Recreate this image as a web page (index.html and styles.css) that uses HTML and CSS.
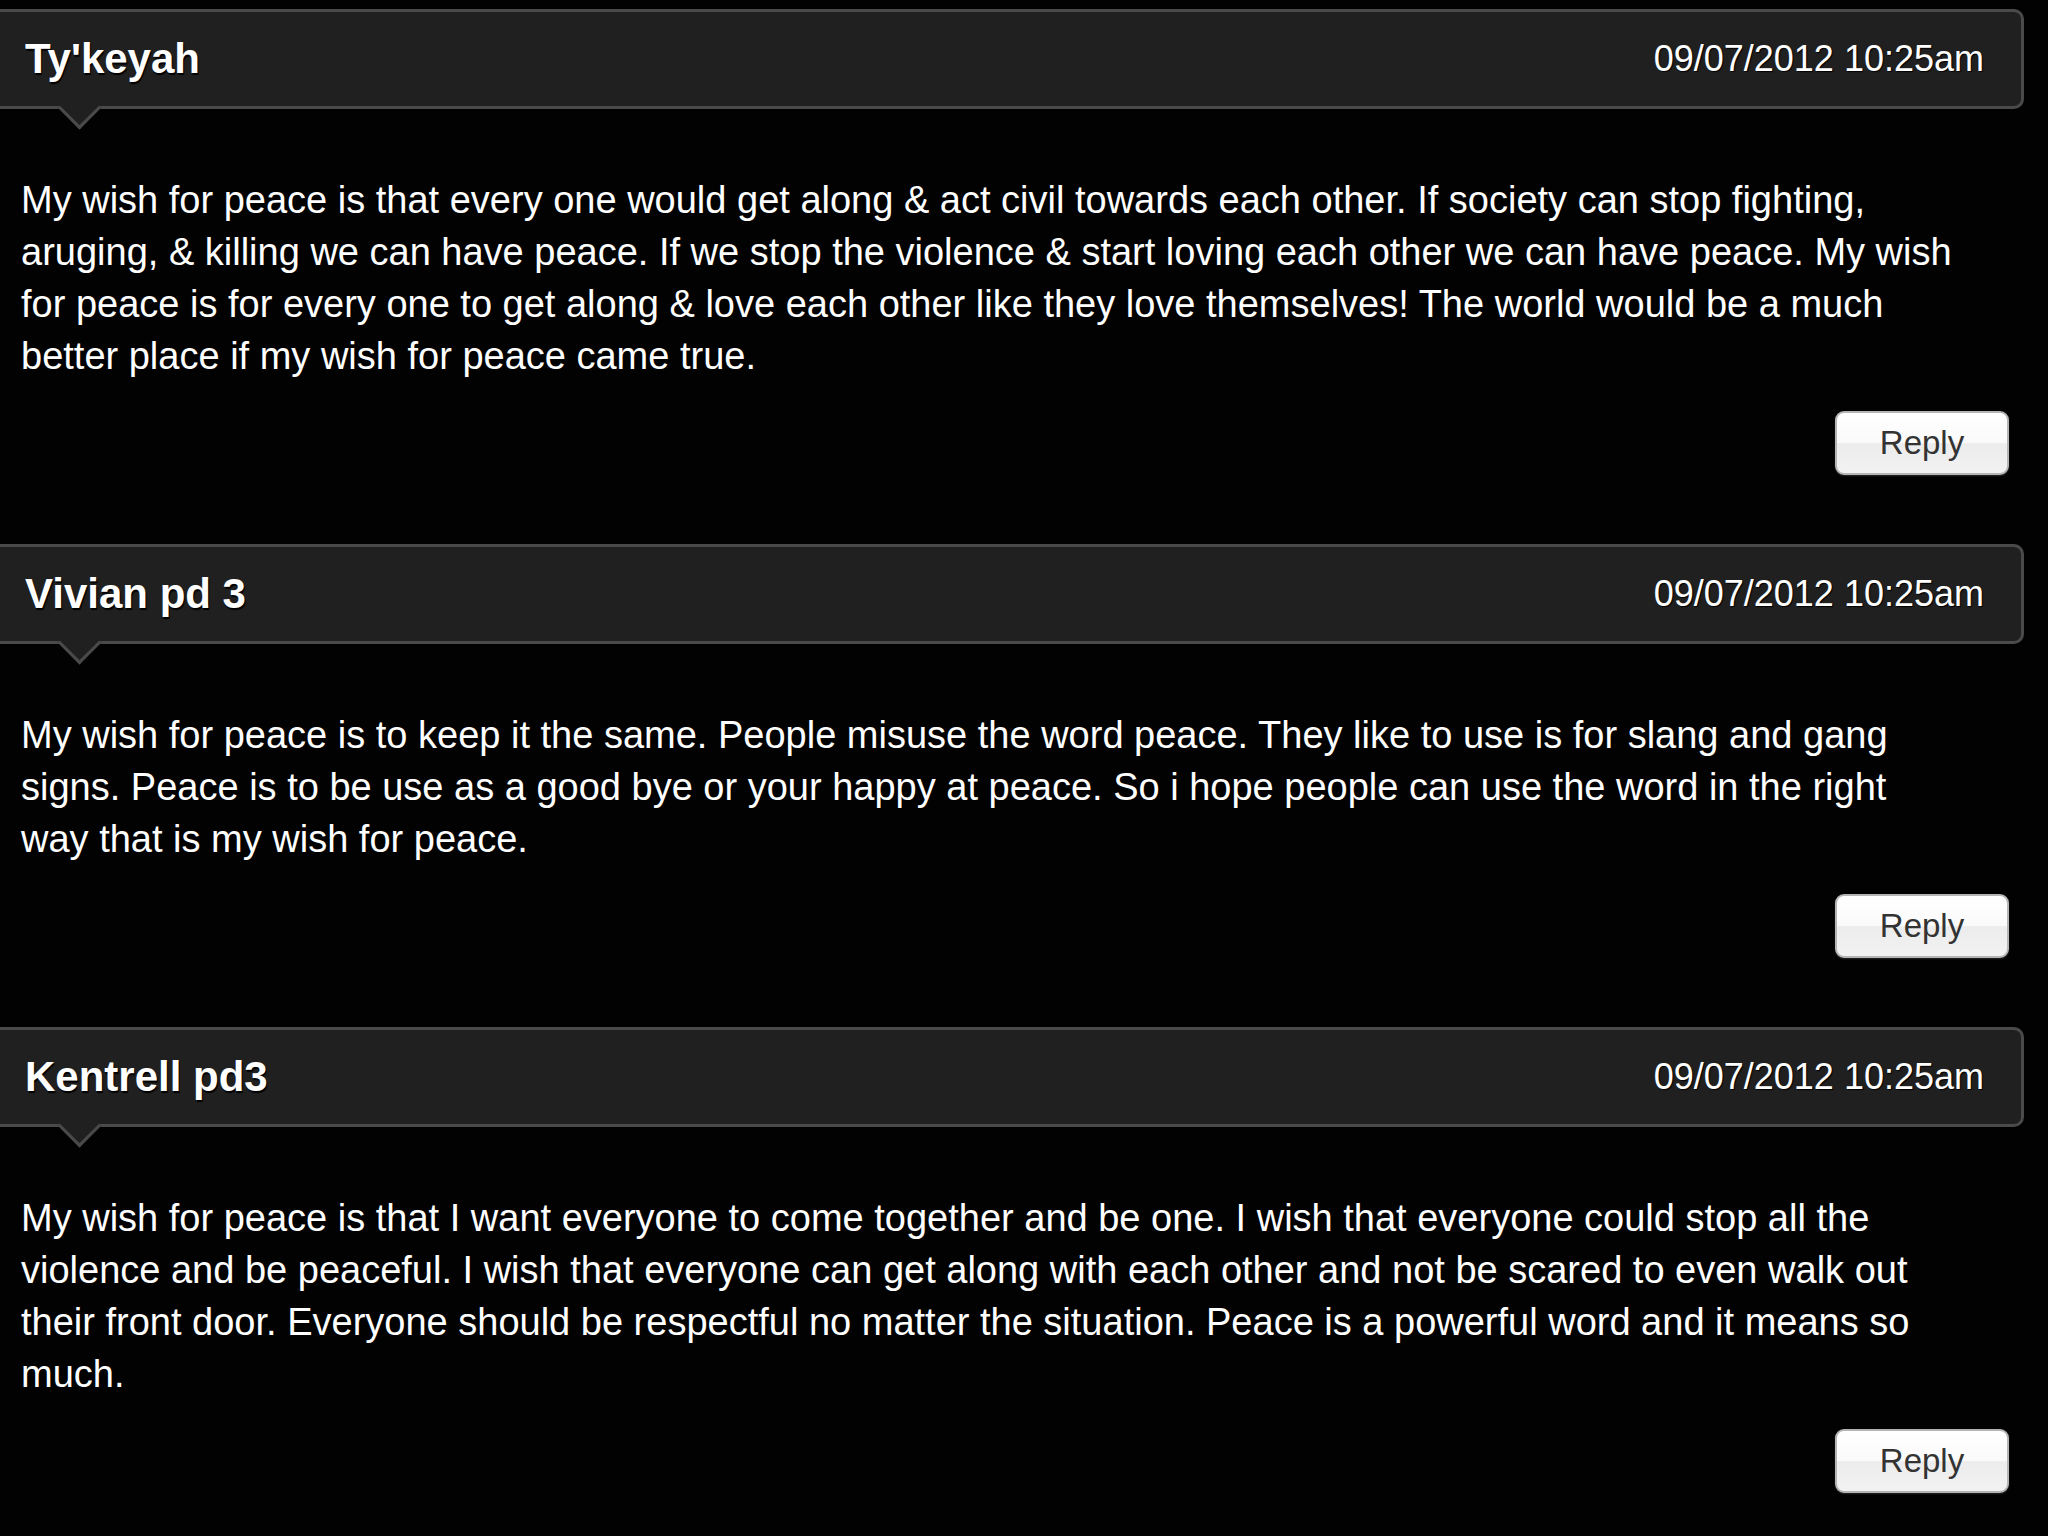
FILE: index.html
```html
<!DOCTYPE html>
<html lang="en">
<head>
<meta charset="utf-8">
<title>Comments</title>
<link rel="stylesheet" href="styles.css">
</head>
<body>
<div class="comments">
  <div class="comment">
    <div class="comment-head">
      <span class="author">Ty'keyah</span>
      <span class="date">09/07/2012 10:25am</span>
    </div>
    <p class="comment-body">My wish for peace is that every one would get along &amp; act civil towards each other. If society can stop fighting, aruging, &amp; killing we can have peace. If we stop the violence &amp; start loving each other we can have peace. My wish for peace is for every one to get along &amp; love each other like they love themselves! The world would be a much better place if my wish for peace came true.</p>
    <div class="comment-actions"><button class="reply">Reply</button></div>
  </div>
  <div class="comment">
    <div class="comment-head">
      <span class="author">Vivian pd 3</span>
      <span class="date">09/07/2012 10:25am</span>
    </div>
    <p class="comment-body">My wish for peace is to keep it the same. People misuse the word peace. They like to use is for slang and gang signs. Peace is to be use as a good bye or your happy at peace. So i hope people can use the word in the right way that is my wish for peace.</p>
    <div class="comment-actions"><button class="reply">Reply</button></div>
  </div>
  <div class="comment">
    <div class="comment-head">
      <span class="author">Kentrell pd3</span>
      <span class="date">09/07/2012 10:25am</span>
    </div>
    <p class="comment-body">My wish for peace is that I want everyone to come together and be one. I wish that everyone could stop all the violence and be peaceful. I wish that everyone can get along with each other and not be scared to even walk out their front door. Everyone should be respectful no matter the situation. Peace is a powerful word and it means so much.</p>
    <div class="comment-actions"><button class="reply">Reply</button></div>
  </div>
</div>
</body>
</html>
```

FILE: styles.css
```css
html, body {
  margin: 0;
  padding: 0;
  background: #020202;
}

body {
  font-family: "Liberation Sans", Arial, sans-serif;
  color: #ffffff;
  overflow: hidden;
}

.comments {
  display: flex;
  flex-direction: column;
  padding-top: 9px;
}

.comment {
  display: flex;
  flex-direction: column;
  margin-bottom: 69px;
}

.comment-head {
  position: relative;
  display: flex;
  align-items: center;
  justify-content: space-between;
  height: 94px;
  margin-left: -14px;
  margin-right: 24px;
  padding: 0 37px 0 36px;
  background: #202020;
  border: 3px solid #4a4a4a;
  border-radius: 10px;
}

.comment-head::after {
  content: "";
  position: absolute;
  left: 75px;
  bottom: -17px;
  width: 28px;
  height: 28px;
  background: #202020;
  border-right: 3px solid #4a4a4a;
  border-bottom: 3px solid #4a4a4a;
  transform: rotate(45deg);
}

.author {
  font-size: 42px;
  font-weight: bold;
  color: #ffffff;
  text-shadow: 1px 2px 1px #000000;
}

.date {
  font-size: 36px;
  color: #ffffff;
  text-shadow: 1px 1px 1px #000000;
}

.comment-body {
  margin: 65px 0 0 0;
  padding: 0 90px 0 21px;
  font-size: 38px;
  line-height: 52px;
  color: #ffffff;
}

.comment-actions {
  display: flex;
  justify-content: flex-end;
  padding-right: 39px;
  margin-top: 29px;
}

.reply {
  width: 174px;
  height: 64px;
  padding: 0;
  font-family: "Liberation Sans", Arial, sans-serif;
  font-size: 33px;
  color: #333333;
  background: linear-gradient(#ffffff 0%, #fafafa 50%, #ececec 51%, #f2f2f2 100%);
  border: 2px solid #b5b5b5;
  border-radius: 9px;
  box-shadow: 0 1px 2px rgba(255, 255, 255, 0.15);
  cursor: pointer;
}
```
